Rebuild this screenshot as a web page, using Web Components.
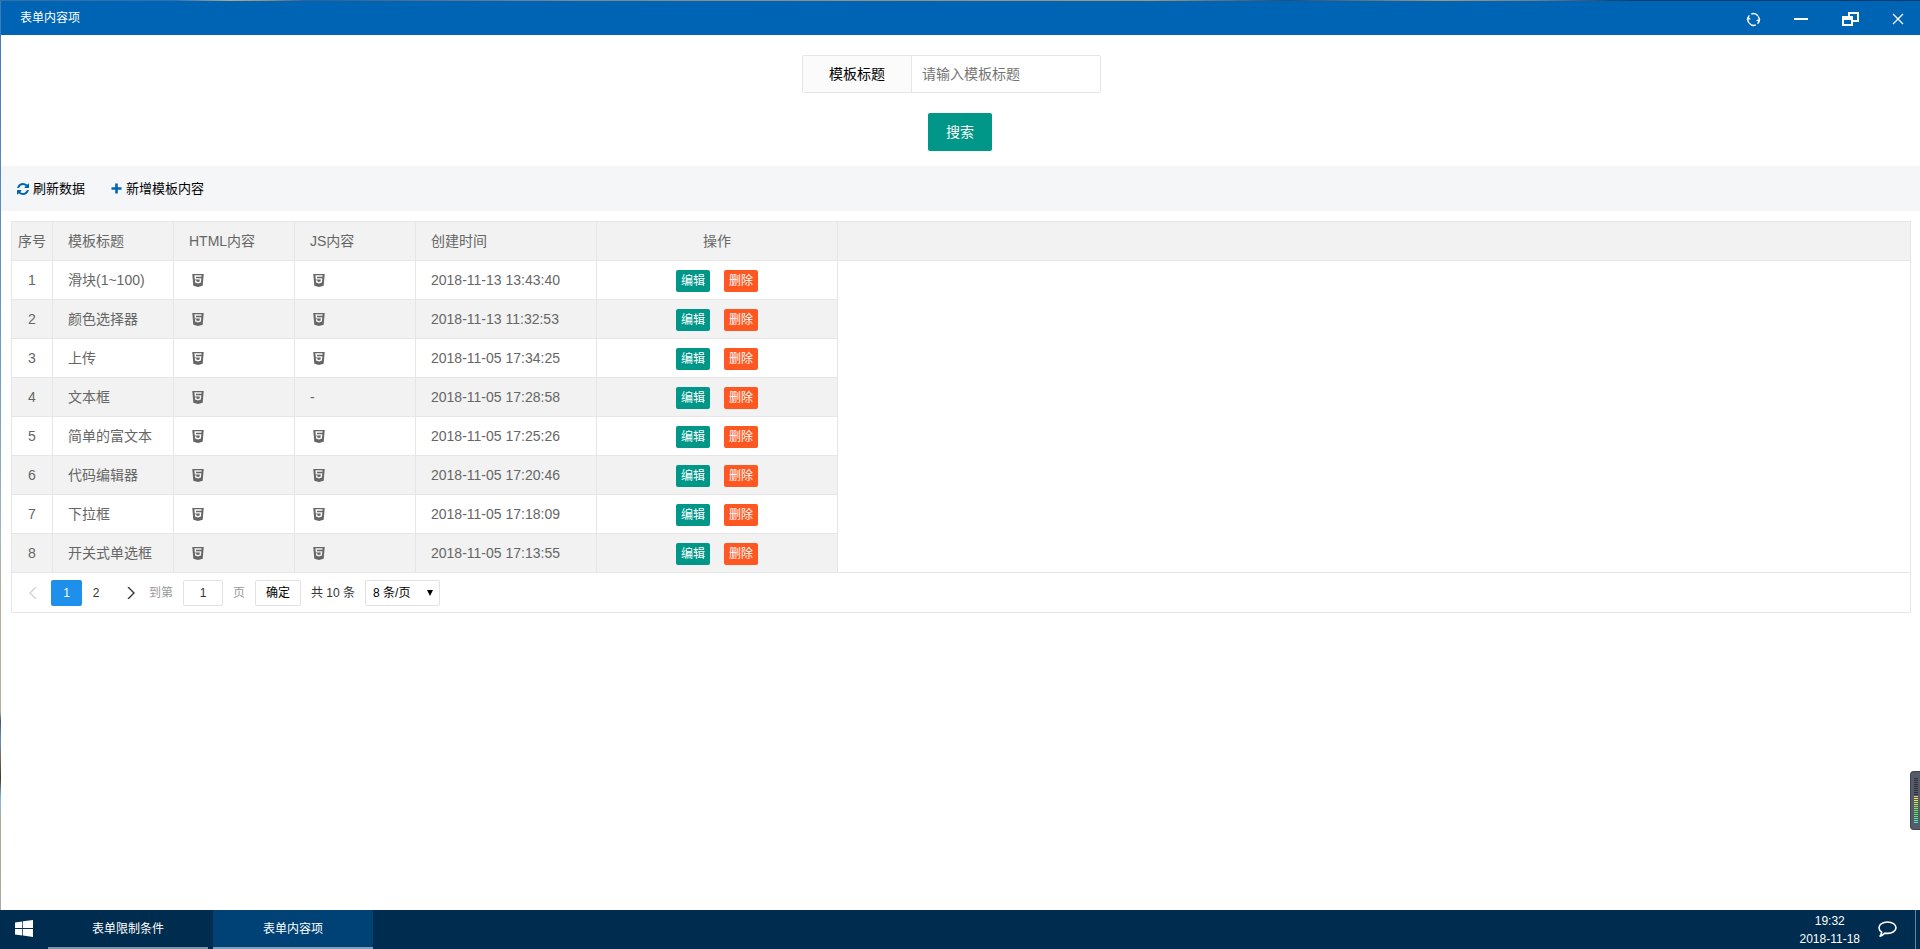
<!DOCTYPE html>
<html lang="zh-CN">
<head>
<meta charset="utf-8">
<title>表单内容项</title>
<style>
html, body { height: 100%; }
body { margin: 0; overflow: hidden; font: 14px/24px "Liberation Sans", "Noto Sans CJK SC", sans-serif; color: #000; }
</style>
</head>
<body>
<desk-top></desk-top>
<script>
const define = (name, html, setup) => customElements.define(name, class extends HTMLElement {
  connectedCallback() {
    if (this.shadowRoot) return;
    const root = this.attachShadow({ mode: 'open' });
    const t = document.createElement('template');
    t.innerHTML = '<style>*{box-sizing:border-box}button,input,select{font:inherit;margin:0;border-radius:0}a{text-decoration:none;color:inherit}svg{display:block}</style>' +
      (typeof html === 'function' ? html(this) : html);
    root.append(t.content.cloneNode(true));
    if (setup) setup(this, root);
  }
});

const icons = {
  reload: ['0 0 16 16', '<g fill="none" stroke="currentColor" stroke-width="1.5"><path d="M3.2 11.600A6.200 6.200 0 0 1 3.600 3.600M5.600 2.200a6.200 6.200 0 0 1 7.200 2M12.900 4.600A6.200 6.200 0 0 1 12.400 12.500M10.400 13.900a6.200 6.200 0 0 1-7-2.100"/></g><path d="M.6 8.200 2.400 5l3 2.600zM10.600 8.400l3 2.600L15.400 7.800z" fill="currentColor"/>'],
  min: ['0 0 16 16', '<path d="M1 7h14v2H1z" fill="currentColor"/>'],
  restore: ['0 0 17 15', '<path fill="currentColor" fill-rule="evenodd" d="M6 0h11v10h-6v4H0V4h6zM8 2v2h3v4h4V2zM2 8v4h7V8z"/>'],
  close: ['0 0 12 12', '<path d="M1 1l10 10M11 1 1 11" stroke="currentColor" stroke-width="1.3" fill="none"/>'],
  refresh: ['0 0 1536 1536', '<path fill="currentColor" d="M1511 928q0 5-1 7-64 268-268 434.500T764 1536q-146 0-282.500-55T238 1324l-129 129q-19 19-45 19t-45-19-19-45V960q0-26 19-45t45-19h448q26 0 45 19t19 45-19 45l-137 137q71 66 161 102t187 36q134 0 250-65t186-179q11-17 53-117 8-23 30-23h192q13 0 22.500 9.500t9.500 22.500zm25-800v448q0 26-19 45t-45 19h-448q-26 0-45-19t-19-45 19-45l138-138Q969 256 768 256q-134 0-250 65T332 500q-11 17-53 117-8 23-30 23H50q-13 0-22.500-9.500T18 608v-7q65-268 270-434.500T768 0q146 0 284 55.500T1297 212l130-129q19-19 45-19t45 19 19 45z"/>'],
  plus: ['0 0 11 11', '<path d="M4.200.5h2.600v3.700h3.700v2.600H6.800v3.700H4.200V6.800H.5V4.200h3.700z" fill="currentColor"/>'],
  html: ['0 0 1408 1600', '<path fill="currentColor" fill-rule="evenodd" d="M1130 331l16-175H262l47 534h612l-22 228-197 53-196-53-13-140H318l22 278 362 100h4v-1l359-99 50-544H471l-15-181zM0 0h1408l-128 1438-578 162-574-162z"/>'],
  prev: ['0 0 12 12', '<path d="M9 0 3 6l6 6" fill="none" stroke="currentColor" stroke-width="1.400"/>'],
  next: ['0 0 12 12', '<path d="m3 0 6 6-6 6" fill="none" stroke="currentColor" stroke-width="1.400"/>'],
  windows: ['0 0 18 17', '<path fill="currentColor" d="M0 2.500 7.300 1.400v6.700H0zM8 1.300 18 0v8.100H8zM0 8.900h7.300v6.600L0 14.400zM8 8.900h10V17L8 15.600z"/>'],
  chat: ['0 0 19 17', '<path fill="none" stroke="currentColor" stroke-width="1.600" stroke-linejoin="round" d="M9.500 1c4.700 0 8.500 2.500 8.500 5.700s-3.800 5.700-8.500 5.700c-.9 0-1.700-.1-2.500-.3-1.300 1.500-2.800 2.600-4.900 3 .9-1.200 1.500-2.600 1.600-4C2 10 1 8.500 1 6.700 1 3.500 4.800 1 9.500 1z"/>']
};
define('ui-icon', el => {
  const [box, body] = icons[el.getAttribute('name')];
  return `<style>:host{display:block;flex:none}svg{width:100%;height:100%}</style><svg viewBox="${box}" aria-hidden="true">${body}</svg>`;
});

define('title-bar', `<style>
:host{display:flex;height:34px;background:#0064b4;color:#fff;font-size:12px;align-items:center;justify-content:space-between;padding:0 1px 0 19px}
nav{display:flex;height:100%;padding-top:2px}
button{border:0;background:none;color:inherit;padding:0;width:48px;display:flex;align-items:center;justify-content:center}
button:nth-child(3){width:51px}
button:last-child{width:43px}
.s{width:15px;height:15px}.m{width:16px;height:16px}.r{width:17px;height:15px}.c{width:12px;height:12px}
</style><slot></slot><nav>
<button aria-label="刷新"><ui-icon class="s" name="reload"></ui-icon></button>
<button aria-label="最小化"><ui-icon class="m" name="min"></ui-icon></button>
<button aria-label="还原"><ui-icon class="r" name="restore"></ui-icon></button>
<button aria-label="关闭"><ui-icon class="c" name="close"></ui-icon></button></nav>`);

define('search-form', `<style>
:host{display:block;box-sizing:border-box;height:131px;padding:20px 1px 0 0}
form{display:flex;flex-direction:column;align-items:center;gap:20px}
.field{display:flex;width:299px;height:38px;margin-right:17px;border:1px solid #e6e6e6;border-radius:2px}
label{width:109px;background:#fbfbfb;border-right:1px solid #e6e6e6;text-align:center;line-height:36px}
input{flex:1;min-width:0;border:0;padding:0 10px;background:#fff;outline:0}
input::placeholder{color:#757575}
button{width:64px;height:38px;border:0;border-radius:2px;background:#009688;color:#fff;padding:0}
</style><form onsubmit="return false"><div class="field"><label for="t">模板标题</label><input id="t" placeholder="请输入模板标题"></div><button>搜索</button></form>`);

define('tool-bar', `<style>
:host{display:flex;height:45px;background:#f4f6f8;padding:0 16px;gap:26px;font-size:13px}
button{display:flex;align-items:center;gap:4px;border:0;background:none;padding:0;color:#000}
ui-icon{width:12px;height:12px;color:#0064b4}
ui-icon[name=plus]{width:11px;height:11px}
</style><button><ui-icon name="refresh"></ui-icon>刷新数据</button><button><ui-icon name="plus"></ui-icon>新增模板内容</button>`);

define('data-table', `<style>
:host{display:block;color:#666}
table{border-collapse:separate;border-spacing:0;table-layout:fixed;width:826px}
th,td{height:39px;padding:0 15px;border:solid #e6e6e6;border-width:0 1px 1px 0;font-weight:400;text-align:left;white-space:nowrap}
thead th{background:#f2f2f2}
tr:nth-child(even) td{background:#f2f2f2}
th:first-child,td:first-child{padding:0;text-align:center}
th:last-child,td:last-child{text-align:center}
.wrap{background:linear-gradient(#f2f2f2 38px,#e6e6e6 38px,#e6e6e6 39px,#fff 39px,#fff calc(100% - 1px),#e6e6e6 calc(100% - 1px))}
td ui-icon{width:12px;height:13px;margin-left:3px}
.ops{display:flex;justify-content:center;gap:14px;padding-top:2px}
.ops button{width:34px;height:22px;border:0;border-radius:2px;background:#009688;color:#fff;font-size:12px;line-height:22px;padding:0}
.ops button.del{background:#ff5722}
</style><div class="wrap"><table><colgroup><col style="width:41px"><col style="width:121px"><col style="width:121px"><col style="width:121px"><col style="width:181px"><col style="width:241px"></colgroup>
<thead><tr><th>序号</th><th>模板标题</th><th>HTML内容</th><th>JS内容</th><th>创建时间</th><th>操作</th></tr></thead><tbody></tbody></table></div>`, (el, root) => {
  const rows = [['滑块(1~100)', 1, '2018-11-13 13:43:40'], ['颜色选择器', 1, '2018-11-13 11:32:53'], ['上传', 1, '2018-11-05 17:34:25'], ['文本框', 0, '2018-11-05 17:28:58'], ['简单的富文本', 1, '2018-11-05 17:25:26'], ['代码编辑器', 1, '2018-11-05 17:20:46'], ['下拉框', 1, '2018-11-05 17:18:09'], ['开关式单选框', 1, '2018-11-05 17:13:55']];
  const ic = '<ui-icon name="html"></ui-icon>';
  root.querySelector('tbody').innerHTML = rows.map(([n, js, d], i) => `<tr><td>${i + 1}</td><td>${n}</td><td>${ic}</td><td>${js ? ic : '-'}</td><td>${d}</td><td><div class="ops"><button>编辑</button><button class="del">删除</button></div></td></tr>`).join('');
});

define('page-nav', `<style>
:host{display:flex;align-items:center;height:39px;font-size:12px;color:#333;padding:0 7px;box-sizing:border-box}
button,input,select{height:26px;border:1px solid #e2e2e2;border-radius:2px;background:#fff;padding:0;color:#000}
.p{border:0;width:28px;color:#333;display:flex;align-items:center;justify-content:center}
.p.off{color:#d2d2d2;margin-right:4px}
.p.on{width:31px;background:#1e90ec;color:#fff}
.p.nx{margin-left:5px;width:32px}
ui-icon{width:12px;height:12px}
label,.g{color:#999;display:flex;align-items:center}
label{margin-left:2px;gap:10px}
input{width:40px;text-align:center;color:#333}
.g{margin:0 10px}
.ok{width:46px}
.tot{margin:0 10px}
.sel{position:relative}
select{appearance:none;width:75px;padding:0 7px;display:block}
.sel::after{content:"";position:absolute;right:7px;top:10px;border:solid transparent;border-width:6px 3px 0;border-top-color:#000;pointer-events:none}
</style><button class="p off" aria-label="上一页"><ui-icon name="prev"></ui-icon></button><button class="p on">1</button><button class="p">2</button><button class="p nx" aria-label="下一页"><ui-icon name="next"></ui-icon></button>
<label>到第<input value="1"></label><span class="g">页</span><button class="ok">确定</button><span class="tot">共 10 条</span><span class="sel"><select aria-label="每页条数"><option>8 条/页</option></select></span>`);

define('app-window', `<style>
:host{display:block;background:#fff;margin:1px 0 0 1px}
.grid{margin:10px 9px 0 10px;border:1px solid #e6e6e6}
</style><title-bar>表单内容项</title-bar><search-form></search-form><tool-bar></tool-bar><div class="grid"><data-table></data-table><page-nav></page-nav></div>`);

define('task-bar', `<style>
:host{display:flex;height:39px;background:#002c4f;color:#fff;font-size:12px}
button{border:0;background:none;color:inherit;padding:0}
.start{width:48px;display:flex;align-items:center;justify-content:center;padding-bottom:2px}
.start ui-icon{width:18px;height:17px}
.task{width:160px;margin-right:5px;border-bottom:2px solid #7f95a7}
.task.on{background:#004275;border-color:#7fa0ba}
.right{margin-left:auto;display:flex;align-items:center}
time{line-height:18px;text-align:center}
.chat{margin:0 18px;width:19px;height:17px}
.peek{width:5px;height:100%;border-left:1px solid #6b8499}
</style><button class="start" aria-label="开始"><ui-icon name="windows"></ui-icon></button><button class="task">表单限制条件</button><button class="task on">表单内容项</button>
<div class="right"><time>19:32<br>2018-11-18</time><button class="chat" aria-label="消息"><ui-icon name="chat"></ui-icon></button><span class="peek"></span></div>`);

define('level-meter', `<style>
:host{display:block;box-sizing:border-box;width:10px;height:59px;background:#555b69;border:1px solid #3f4450;border-right:0;border-radius:4px 0 0 4px;padding:6px 0 0 3px}
i{display:block;width:4px;height:1px;margin-bottom:1px}
</style>` + Array.from({ length: 23 }, (_, i) => `<i style="background:${i < 9 ? '#2d3039' : `hsl(${48 + (i - 9) * 9} 80% 62%)`}"></i>`).join(''));

define('desk-top', `<style>
:host{display:flex;flex-direction:column;height:100vh;background:
linear-gradient(90deg,#3a6ea5,#2f6fb0 9%,#b0a890 12%,#8f8f80 14%,#2a5f98 16%,#7f8890 30%,#a09880 60%,#1f4f80 67%,#a09880 75%,#6f7f90 80%,#023a70 85%,#023a70) top/100% 1px no-repeat,
linear-gradient(#3f78b8,#5b90c0 25%,#6f9fc5 40%,#a0b8b8 57%,#b8ad98 63%,#b8ad98 75%,#405870 76%,#5b96c0 78%,#7a6a50 80%,#403830 82%,#80b8d8 84%,#b0a898 87%,#9fb0a8)}
app-window{flex:1}
level-meter{position:absolute;right:0;top:771px}
</style><app-window></app-window><task-bar></task-bar><level-meter></level-meter>`);
</script>
</body>
</html>
